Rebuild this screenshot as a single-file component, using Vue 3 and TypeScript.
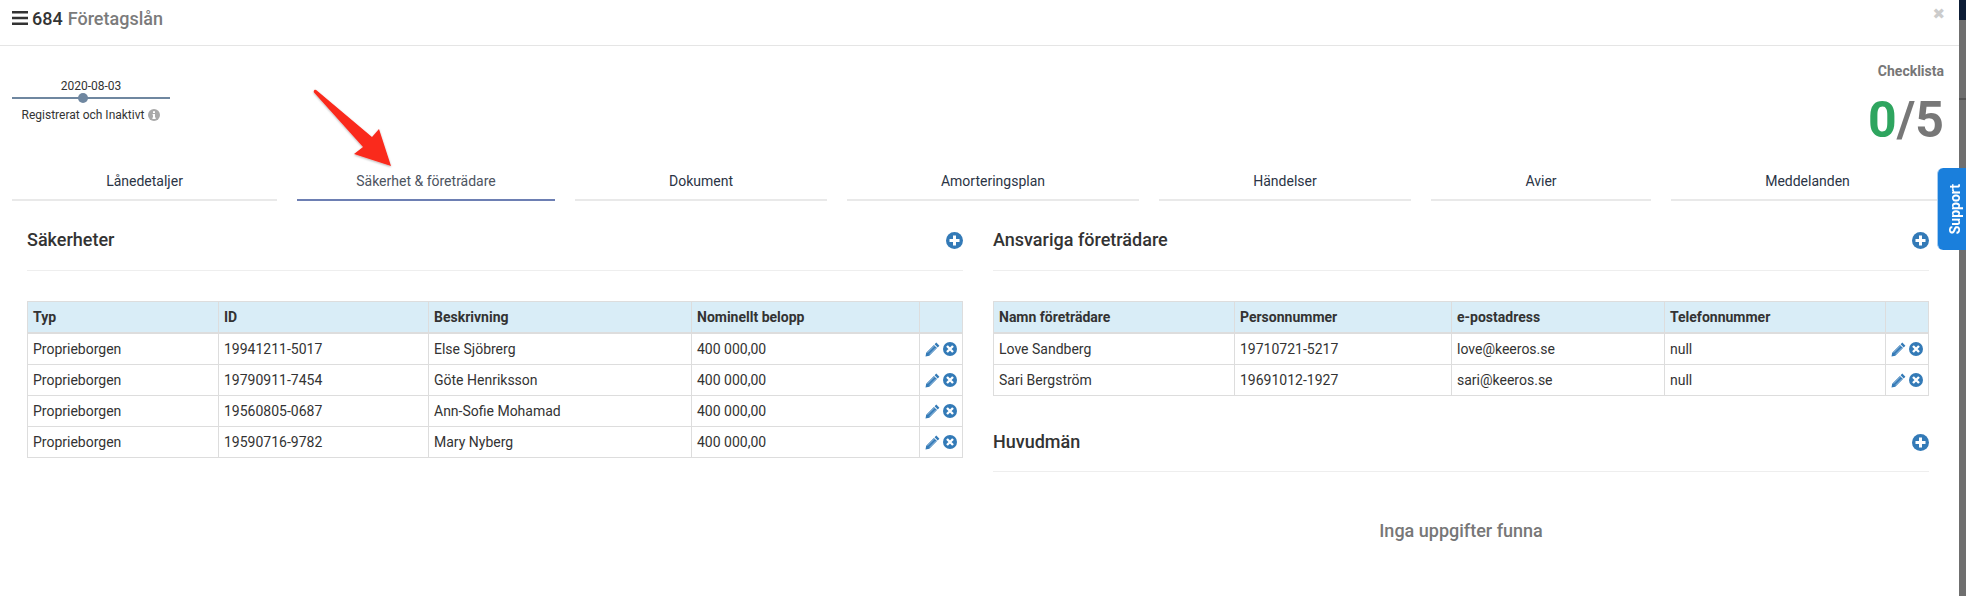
<script setup lang="ts">
const tabs: { label: string; active?: boolean }[] = [
  { label: 'Lånedetaljer' },
  { label: 'Säkerhet & företrädare', active: true },
  { label: 'Dokument' },
  { label: 'Amorteringsplan' },
  { label: 'Händelser' },
  { label: 'Avier' },
  { label: 'Meddelanden' },
]
const secHead = ['Typ', 'ID', 'Beskrivning', 'Nominellt belopp', '']
const secRows = [
  ['Proprieborgen', '19941211-5017', 'Else Sjöbrerg', '400 000,00'],
  ['Proprieborgen', '19790911-7454', 'Göte Henriksson', '400 000,00'],
  ['Proprieborgen', '19560805-0687', 'Ann-Sofie Mohamad', '400 000,00'],
  ['Proprieborgen', '19590716-9782', 'Mary Nyberg', '400 000,00'],
]
const repHead = ['Namn företrädare', 'Personnummer', 'e-postadress', 'Telefonnummer', '']
const repRows = [
  ['Love Sandberg', '19710721-5217', 'love@keeros.se', 'null'],
  ['Sari Bergström', '19691012-1927', 'sari@keeros.se', 'null'],
]
</script>

<template>
  <div class="page">
    <div class="modal">
      <header class="top">
        <svg class="burger" width="16" height="14" viewBox="0 0 16 14"><path d="M0 0h16v2.6H0zM0 5.7h16v2.6H0zM0 11.4h16V14H0z" fill="#333" /></svg>
        <span class="num">684</span>
        <span class="kind">Företagslån</span>
        <span class="close">✖</span>
      </header>

      <div class="status">
        <div class="timeline">
          <div class="date">2020-08-03</div>
          <div class="track"><i class="dot"></i></div>
          <div class="state">
            Registrerat och Inaktivt
            <svg width="12" height="12" viewBox="0 0 12 12"><circle cx="6" cy="6" r="6" fill="#a9a9a9" /><path d="M5 2.2h2v1.7H5zM4.6 5h2.4v3.6h.7V10H4.4V8.6H5V6.3h-.4z" fill="#fff" /></svg>
          </div>
        </div>
        <div class="check">
          <div class="check-label">Checklista</div>
          <div class="score"><span class="zero">0</span>/5</div>
        </div>
      </div>

      <nav class="tabs">
        <div v-for="t in tabs" :key="t.label" class="tab" :class="{ active: t.active }">{{ t.label }}</div>
      </nav>

      <main class="cols">
        <section>
          <div class="sec-head">
            <h3>Säkerheter</h3>
            <svg class="add" width="17" height="17" viewBox="0 0 17 17"><circle cx="8.5" cy="8.5" r="8.5" fill="#337ab7" /><path d="M7 3.5h3V7h3.5v3H10v3.5H7V10H3.5V7H7z" fill="#fff" /></svg>
          </div>
          <table class="grid left">
            <colgroup><col class="l1" /><col class="l2" /><col class="l3" /><col class="l4" /><col /></colgroup>
            <thead><tr><th v-for="(h, i) in secHead" :key="i">{{ h }}</th></tr></thead>
            <tbody>
              <tr v-for="r in secRows" :key="r[1]">
                <td v-for="c in r" :key="c">{{ c }}</td>
                <td class="acts">
                  <svg width="15" height="15" viewBox="0 0 15 15"><path d="M11.3.6l3.1 3.1-1.7 1.700-3.100-3.100zM8.900 3l3.100 3.100-7.700 7.700L.5 14.500l.7-3.800z" fill="#337ab7" /><path d="M2.600 10.700l6.600-6.600M4.300 12.400l6.600-6.600" stroke="#a9c8e3" stroke-width=".8" /></svg>
                  <svg width="14" height="14" viewBox="0 0 14 14"><circle cx="7" cy="7" r="7" fill="#337ab7" /><path d="M4 4l6 6M10 4l-6 6" stroke="#fff" stroke-width="2.4" /></svg>
                </td>
              </tr>
            </tbody>
          </table>
        </section>

        <section>
          <div class="sec-head">
            <h3>Ansvariga företrädare</h3>
            <svg class="add" width="17" height="17" viewBox="0 0 17 17"><circle cx="8.5" cy="8.5" r="8.5" fill="#337ab7" /><path d="M7 3.5h3V7h3.5v3H10v3.5H7V10H3.5V7H7z" fill="#fff" /></svg>
          </div>
          <table class="grid right">
            <colgroup><col class="r1" /><col class="r2" /><col class="r3" /><col class="r4" /><col /></colgroup>
            <thead><tr><th v-for="(h, i) in repHead" :key="i">{{ h }}</th></tr></thead>
            <tbody>
              <tr v-for="r in repRows" :key="r[1]">
                <td v-for="c in r" :key="c">{{ c }}</td>
                <td class="acts">
                  <svg width="15" height="15" viewBox="0 0 15 15"><path d="M11.3.6l3.1 3.1-1.7 1.700-3.100-3.100zM8.900 3l3.100 3.100-7.700 7.700L.5 14.500l.7-3.800z" fill="#337ab7" /><path d="M2.600 10.700l6.600-6.600M4.300 12.400l6.600-6.600" stroke="#a9c8e3" stroke-width=".8" /></svg>
                  <svg width="14" height="14" viewBox="0 0 14 14"><circle cx="7" cy="7" r="7" fill="#337ab7" /><path d="M4 4l6 6M10 4l-6 6" stroke="#fff" stroke-width="2.4" /></svg>
                </td>
              </tr>
            </tbody>
          </table>
          <div class="sec-head second">
            <h3>Huvudmän</h3>
            <svg class="add" width="17" height="17" viewBox="0 0 17 17"><circle cx="8.5" cy="8.5" r="8.5" fill="#337ab7" /><path d="M7 3.5h3V7h3.5v3H10v3.5H7V10H3.5V7H7z" fill="#fff" /></svg>
          </div>
          <p class="empty">Inga uppgifter funna</p>
        </section>
      </main>
    </div>

    <div class="backdrop"></div>

    <div class="support"><span>Support</span></div>

    <svg class="arrow" width="100" height="100" viewBox="0 0 100 100">
      <defs>
        <filter id="sh" x="-20%" y="-20%" width="140%" height="140%"><feDropShadow dx="0" dy="1" stdDeviation="1.2" flood-color="#000" flood-opacity=".3" /></filter>
      </defs>
      <path d="M13.200 9.200C14 8.400 15 8.600 15.800 9.500L71 56 78 48 90 85 53 73 62 66 13 11.500C12.600 10.800 12.700 9.800 13.200 9.200Z" fill="#fa2a1f" filter="url(#sh)" />
    </svg>
  </div>
</template>

<style>
html, body { margin: 0; height: 596px; overflow: hidden; background: #fff; }
</style>

<style scoped>
.page {
  position: relative;
  display: flex;
  width: 1966px;
  height: 596px;
  overflow: hidden;
  font-family: Roboto, "Liberation Sans", sans-serif;
  color: #333;
}
.modal { width: 1959px; flex: none; background: #fff; }
.backdrop {
  flex: 1;
  background: linear-gradient(#0d1d35 0 20px, #6f6f6f 20px 98px, #555 98px 100px, #6f6f6f 100px);
}
.top {
  display: flex;
  align-items: center;
  height: 46px;
  padding: 0 0 9px 12px;
  box-sizing: border-box;
  border-bottom: 1px solid #e5e5e5;
  font-size: 18px;
  font-weight: 500;
}
.burger { margin-right: 4px; }
.num { color: #333; margin-right: 5px; }
.kind { color: #7b7b7b; }
.close { margin-left: auto; margin-right: 14px; margin-top: -9px; color: #ccc; font-size: 15px; font-family: "DejaVu Sans", sans-serif; }
.status {
  display: flex;
  justify-content: space-between;
  height: 120px;
  padding: 0 15px 0 12px;
}
.timeline { width: 158px; padding-top: 33px; text-align: center; font-size: 12px; color: #333; }
.date { line-height: 14px; }
.track { position: relative; height: 2px; margin-top: 4px; background: #6f87a0; }
.dot { position: absolute; left: 66px; top: -4px; width: 10px; height: 10px; border-radius: 50%; background: #6f87a0; }
.state { display: flex; align-items: center; justify-content: center; gap: 4px; margin-top: 9px; line-height: 14px; }
.check { text-align: right; padding-top: 17px; }
.check-label { font-size: 14px; font-weight: 700; color: #777; line-height: 16px; }
.score { font-size: 50px; font-weight: 700; line-height: 61px; margin-top: 11px; color: #777; }
.zero { color: #2ea55f; }
.tabs {
  display: grid;
  grid-template-columns: 265px 258px 252px 292px 252px 220px 273px;
  column-gap: 20px;
  padding-left: 12px;
}
.tab {
  height: 35px;
  box-sizing: border-box;
  line-height: 30px;
  text-align: center;
  font-size: 14px;
  color: #2b3445;
  border-bottom: 2px solid #e9e9e9;
}
.tab.active { border-bottom-color: #6d7fb3; color: #4d545f; }
.cols {
  display: grid;
  grid-template-columns: 936px 936px;
  column-gap: 30px;
  padding: 0 0 0 27px;
}
.sec-head {
  display: flex;
  align-items: center;
  justify-content: space-between;
  height: 70px;
  box-sizing: border-box;
  padding-top: 9px;
  border-bottom: 1px solid #eee;
  margin-bottom: 30px;
}
.sec-head.second { height: 76px; padding-top: 17px; margin-bottom: 0; }
.sec-head h3 { margin: 0; font-size: 18px; font-weight: 500; color: #333; line-height: 20px; }
.grid {
  width: 100%;
  table-layout: fixed;
  border-collapse: collapse;
  font-size: 14px;
  color: #333;
}
.l1 { width: 191px; } .l2 { width: 210px; } .l3 { width: 263px; } .l4 { width: 228px; }
.r1 { width: 241px; } .r2 { width: 217px; } .r3 { width: 213px; } .r4 { width: 221px; }
.grid th, .grid td { border: 1px solid #ddd; padding: 0 5px; text-align: left; height: 30px; white-space: nowrap; overflow: hidden; }
.grid th { background: #d9edf7; font-weight: 700; border-bottom-width: 2px; }
.grid td.acts { padding: 0 5px 0 0; text-align: right; font-size: 0; }
.acts svg { vertical-align: middle; margin-left: 3px; }
.empty { margin: 48px 0 0; text-align: center; font-size: 18px; font-weight: 500; color: #777; line-height: 22px; }
.support {
  position: absolute;
  left: 1937px;
  top: 168px;
  width: 29px;
  height: 82px;
  box-sizing: border-box;
  padding-left: 6px;
  background: #1a7fdc;
  border-left: 1px solid #a8cdf0;
  border-radius: 6px 0 0 6px;
  display: flex;
  align-items: center;
  justify-content: center;
}
.support span {
  writing-mode: vertical-rl;
  transform: rotate(180deg);
  color: #fff;
  font-size: 14px;
  font-weight: 700;
}
.arrow { position: absolute; left: 301px; top: 81px; overflow: visible; }
</style>
